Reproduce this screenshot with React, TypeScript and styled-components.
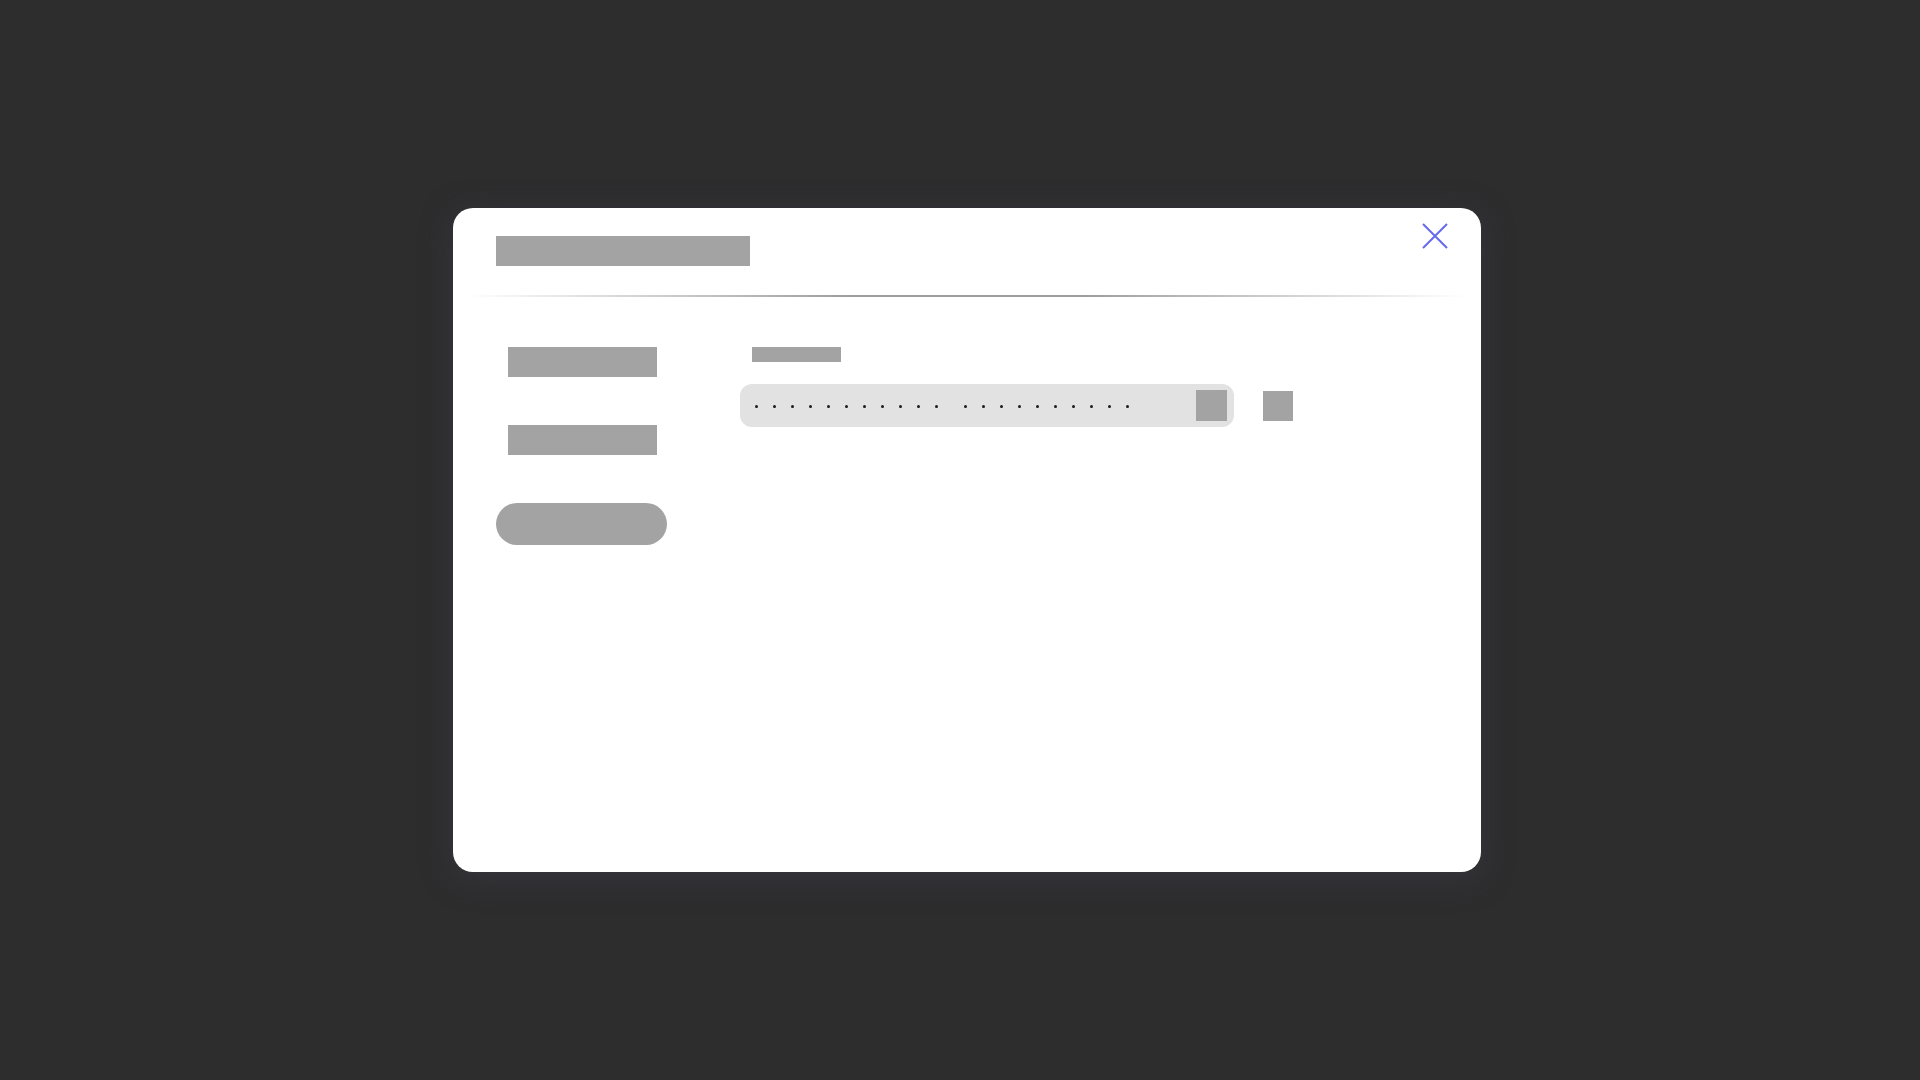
import React from 'react';
import styled, { createGlobalStyle } from 'styled-components';

const GlobalStyle = createGlobalStyle`
  html, body {
    margin: 0;
    padding: 0;
    background-color: #2d2d2e;
    font-family: 'Liberation Sans', Arial, sans-serif;
  }
`;

const Page = styled.div`
  min-height: 100vh;
  display: flex;
  align-items: center;
  justify-content: center;
  padding-left: 14px;
  box-sizing: border-box;
`;

const Modal = styled.div`
  position: relative;
  width: 1028px;
  height: 664px;
  background-color: #ffffff;
  border-radius: 20px;
  box-shadow: 0 6px 30px rgba(58, 58, 70, 0.7);
  display: flex;
  flex-direction: column;
`;

const Header = styled.div`
  height: 87px;
  padding: 28px 0 0 43px;
  box-sizing: border-box;
`;

const Placeholder = styled.div<{ $w: number; $h: number }>`
  width: ${p => p.$w}px;
  height: ${p => p.$h}px;
  background-color: #a3a3a3;
  flex-shrink: 0;
`;

const CloseButton = styled.button`
  position: absolute;
  top: 14px;
  right: 32px;
  width: 28px;
  height: 28px;
  padding: 0;
  border: none;
  background: none;
  cursor: pointer;
  display: flex;
  align-items: center;
  justify-content: center;
`;

const Divider = styled.hr`
  height: 2px;
  margin: 0 14px 0 12px;
  border: none;
  background: linear-gradient(
    to right,
    rgba(158, 158, 158, 0) 0%,
    #9e9e9e 38%,
    #9e9e9e 62%,
    rgba(158, 158, 158, 0) 100%
  );
`;

const Body = styled.div`
  display: flex;
  padding: 50px 0 0 43px;
  gap: 73px;
`;

const Sidebar = styled.nav`
  display: flex;
  flex-direction: column;
  align-items: flex-start;
  gap: 48px;
`;

const NavItem = styled(Placeholder)`
  margin-left: 12px;
`;

const NavPill = styled.div`
  width: 171px;
  height: 42px;
  border-radius: 21px;
  background-color: #a3a3a3;
`;

const Content = styled.section`
  display: flex;
  flex-direction: column;
  gap: 22px;
`;

const FieldLabel = styled(Placeholder)`
  margin-left: 12px;
`;

const FieldRow = styled.div`
  display: flex;
  align-items: center;
  gap: 29px;
`;

const Input = styled.div`
  width: 494px;
  height: 43px;
  border-radius: 12px;
  background-color: #e2e2e2;
  display: flex;
  align-items: center;
  justify-content: space-between;
  padding: 0 7px 0 15px;
  box-sizing: border-box;
`;

const Dots = styled.div`
  display: flex;
  gap: 26px;
  margin-top: 1px;
`;

const DotGroup = styled.div`
  display: flex;
  gap: 15px;
`;

const Dot = styled.span`
  width: 3px;
  height: 3px;
  border-radius: 50%;
  background-color: #1a1a1a;
`;

const CloseIcon = () => (
  <svg width="26" height="26" viewBox="0 0 26 26">
    <path d="M1 1 L25 25 M25 1 L1 25" stroke="#6668ee" strokeWidth="2" fill="none" />
  </svg>
);

const App = () => {
  return (
    <>
      <GlobalStyle />
      <Page>
        <Modal>
          <Header>
            <Placeholder $w={254} $h={30} />
          </Header>
          <CloseButton aria-label="close">
            <CloseIcon />
          </CloseButton>
          <Divider />
          <Body>
            <Sidebar>
              <NavItem $w={149} $h={30} />
              <NavItem $w={149} $h={30} />
              <NavPill />
            </Sidebar>
            <Content>
              <FieldLabel $w={89} $h={15} />
              <FieldRow>
                <Input>
                  <Dots>
                    <DotGroup>
                      {Array.from({ length: 11 }).map((_, i) => <Dot key={i} />)}
                    </DotGroup>
                    <DotGroup>
                      {Array.from({ length: 10 }).map((_, i) => <Dot key={i} />)}
                    </DotGroup>
                  </Dots>
                  <Placeholder $w={31} $h={31} />
                </Input>
                <Placeholder $w={30} $h={30} />
              </FieldRow>
            </Content>
          </Body>
        </Modal>
      </Page>
    </>
  );
};

export default App;
